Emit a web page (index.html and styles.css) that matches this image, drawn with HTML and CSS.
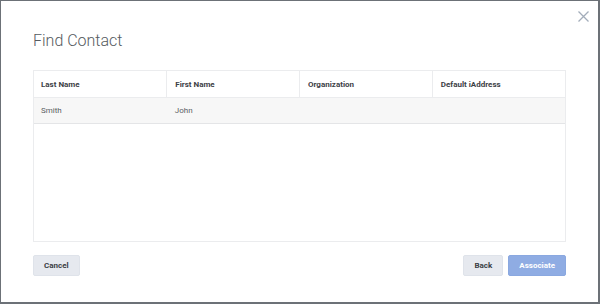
FILE: index.html
```html
<!DOCTYPE html>
<html>
<head>
<meta charset="utf-8">
<link rel="stylesheet" href="styles.css">
</head>
<body>
<div class="dialog">
  <button class="close" aria-label="Close">
    <svg width="11" height="11" viewBox="0 0 11 11"><path d="M0.5 0.5 L10.5 10.5 M10.5 0.5 L0.5 10.5" stroke="#a3adba" stroke-width="1.3" fill="none"/></svg>
  </button>
  <h1 class="title">Find Contact</h1>
  <div class="grid-box">
    <table class="grid">
      <thead>
        <tr><th>Last Name</th><th>First Name</th><th>Organization</th><th>Default iAddress</th></tr>
      </thead>
      <tbody>
        <tr><td>Smith</td><td>John</td><td></td><td></td></tr>
      </tbody>
    </table>
  </div>
  <div class="actions">
    <button class="btn">Cancel</button>
    <div class="right">
      <button class="btn">Back</button>
      <button class="btn primary">Associate</button>
    </div>
  </div>
</div>
</body>
</html>
```
FILE: styles.css
```css
html, body { margin: 0; padding: 0; background: #fff; }
.dialog {
  position: relative;
  box-sizing: border-box;
  width: 600px;
  height: 304px;
  border-style: solid;
  border-color: #6c7177;
  border-width: 1px 2px 2px 1px;
  padding: 30px 32px 26px 32px;
  font-family: Roboto, "Noto Sans", sans-serif;
  background: #fff;
  display: flex;
  flex-direction: column;
}
.close {
  position: absolute;
  top: 10px;
  right: 9px;
  width: 11px;
  height: 11px;
  padding: 0;
  border: 0;
  background: none;
  line-height: 0;
}
.title {
  margin: 0 0 19px 0;
  font-size: 16px;
  line-height: 20px;
  font-weight: 300;
  color: #555a60;
}
.grid-box {
  box-sizing: border-box;
  height: 172px;
  border: 1px solid #ebecee;
}
.grid {
  width: 100%;
  table-layout: fixed;
  border-collapse: collapse;
}
.grid th {
  text-align: left;
  font-size: 8px;
  font-weight: 700;
  color: #3d4146;
  height: 26px;
  padding: 0 7px 0 8px;
  border-left: 1px solid #ebecee;
  border-bottom: 1px solid #ebecee;
}
.grid th:first-child { border-left: 0; padding-left: 7px; }
.grid td {
  font-size: 8px;
  font-weight: 400;
  color: #5a5e63;
  background: #f7f7f7;
  height: 25px;
  padding: 0 7px 0 8px;
  border-bottom: 1px solid #e4e5e7;
}
.grid td:first-child { padding-left: 7px; }
.actions {
  margin-top: 13px;
  display: flex;
  justify-content: space-between;
}
.right { display: flex; gap: 5px; }
.btn {
  height: 21px;
  box-sizing: border-box;
  padding: 0 10px;
  border: 1px solid #dfe3ea;
  border-radius: 2px;
  background: #e6e9ef;
  font-family: Roboto, "Noto Sans", sans-serif;
  font-size: 8px;
  font-weight: 700;
  color: #3b3f45;
}
.btn.primary {
  background: #8facE3;
  border-color: #8aa8e0;
  color: #fff;
  padding: 0 10px;
}
```
